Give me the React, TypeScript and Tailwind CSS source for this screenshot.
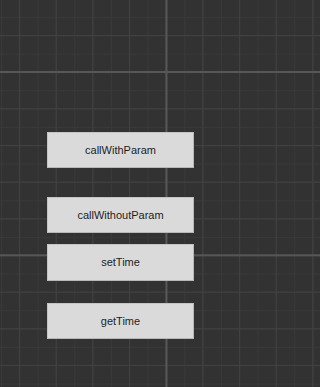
const BUTTONS = [
  { label: "callWithParam", className: "mt-[132px] h-[36px]" },
  { label: "callWithoutParam", className: "mt-[29px] h-[36px]" },
  { label: "setTime", className: "mt-[11px] h-[37px]" },
  { label: "getTime", className: "mt-[22px] h-[36px]" },
];

export default function App() {
  return (
    <div
      className="w-full min-w-[244px] h-screen min-h-[387px] overflow-hidden bg-[#323232] bg-[image:linear-gradient(to_right,#575757_2px,transparent_2px),linear-gradient(to_bottom,#575757_2px,transparent_2px),linear-gradient(to_right,#414141_1px,transparent_1px),linear-gradient(to_bottom,#414141_1px,transparent_1px),linear-gradient(to_right,#393939_1px,transparent_1px),linear-gradient(to_bottom,#393939_1px,transparent_1px)] bg-[size:183.333px_100%,100%_183.333px,36.667px_100%,100%_36.667px,18.333px_100%,100%_18.333px] bg-[position:165.5px_0,0_71px,19px_0,0_35px,1px_0,0_17px]"
      style={{ fontFamily: '"Liberation Sans", Arial, sans-serif' }}
    >
      <div className="flex flex-col pl-[47px]">
        {BUTTONS.map((b) => (
          <button
            key={b.label}
            className={`${b.className} w-[147px] flex items-center justify-center bg-[#dadada] border border-[#c4c4c4] border-b-[#b8b8b8] border-r-[#b8b8b8] text-[11px] text-[#1e1e1e]`}
          >
            {b.label}
          </button>
        ))}
      </div>
    </div>
  );
}
